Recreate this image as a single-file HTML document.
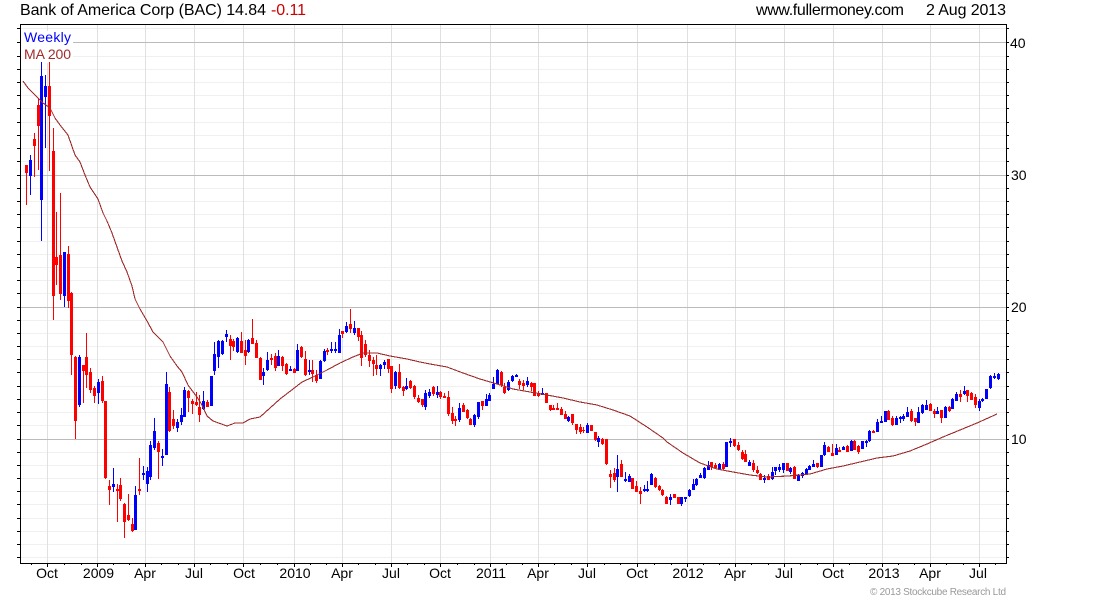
<!DOCTYPE html>
<html>
<head>
<meta charset="utf-8">
<title>Bank of America Corp (BAC)</title>
<style>
html,body{margin:0;padding:0;background:#fff;width:1100px;height:600px;overflow:hidden}
svg{display:block}
text{font-family:"Liberation Sans",Arial,sans-serif;fill:#000}
</style>
</head>
<body>
<svg width="1100" height="600" viewBox="0 0 1100 600" xmlns="http://www.w3.org/2000/svg">
<rect width="1100" height="600" fill="#fff"/>
<g shape-rendering="crispEdges" fill="none">
<path stroke="#f0f0f0" d="M21 28.5H1006M21 56.5H1006M21 69.5H1006M21 82.5H1006M21 95.5H1006M21 108.5H1006M21 122.5H1006M21 135.5H1006M21 148.5H1006M21 161.5H1006M21 188.5H1006M21 201.5H1006M21 214.5H1006M21 227.5H1006M21 241.5H1006M21 254.5H1006M21 267.5H1006M21 280.5H1006M21 293.5H1006M21 320.5H1006M21 333.5H1006M21 346.5H1006M21 359.5H1006M21 372.5H1006M21 386.5H1006M21 399.5H1006M21 412.5H1006M21 425.5H1006M21 452.5H1006M21 465.5H1006M21 478.5H1006M21 491.5H1006M21 504.5H1006M21 518.5H1006M21 531.5H1006M21 544.5H1006M21 557.5H1006"/>
<path stroke="#e0e0e0" d="M47.5 25V563M97.5 25V563M145.5 25V563M194.5 25V563M243.5 25V563M294.5 25V563M342.5 25V563M391.5 25V563M440.5 25V563M490.5 25V563M538.5 25V563M587.5 25V563M637.5 25V563M687.5 25V563M735.5 25V563M784.5 25V563M833.5 25V563M882.5 25V563M930.5 25V563M979.5 25V563"/>
<path stroke="#bbbbbb" d="M21 42.5H1006M21 175.5H1006M21 307.5H1006M21 439.5H1006"/>
</g>
<rect x="21" y="31" width="52" height="32" fill="#fff"/>
<text x="24" y="42" font-size="14" style="fill:#0000ff" textLength="47">Weekly</text>
<text x="24" y="59" font-size="14" style="fill:#a02c2c" textLength="47">MA 200</text>

<g shape-rendering="crispEdges" fill="none">
<path stroke="#0000ff" stroke-width="1" d="M30.5 155V195M41.5 62V241M45.5 75V148M64.5 252V307M79.5 355V407M98.5 379V404M113.5 468V492M135.5 486V530M143.5 466V480M147.5 467V492M150.5 441V480M154.5 418V450M162.5 449V466M166.5 372V455M177.5 419V432M181.5 408V425M184.5 387V417M203.5 391V410M211.5 376V406M214.5 342V375M218.5 340V368M222.5 340V355M226.5 330V342M237.5 337V353M248.5 339V353M263.5 368V385M267.5 352V371M278.5 350V366M290.5 366V371M297.5 344V371M309.5 360V375M320.5 360V379M324.5 349V362M331.5 342V353M335.5 342V353M339.5 329V353M346.5 322V333M354.5 321V335M380.5 364V376M384.5 360V369M395.5 371V389M406.5 378V390M425.5 390V410M429.5 389V398M437.5 386V398M459.5 403V422M474.5 414V427M478.5 402V419M486.5 394V406M489.5 393V401M493.5 377V389M497.5 369V384M508.5 380V391M512.5 375V382M516.5 374V377M527.5 377V387M542.5 388V395M568.5 416V422M587.5 423V433M598.5 436V447M617.5 455V492M625.5 472V482M629.5 474V482M644.5 485V492M647.5 481V492M651.5 473V485M670.5 494V505M681.5 497V506M685.5 497V502M689.5 489V497M693.5 479V490M696.5 478V486M700.5 473V478M704.5 467V479M708.5 461V470M719.5 463V470M726.5 442V467M730.5 438V447M749.5 460V466M764.5 475V483M772.5 467V480M775.5 467V475M779.5 464V472M783.5 463V473M790.5 467V474M798.5 474V481M802.5 472V478M806.5 468V475M809.5 465V470M813.5 460V467M821.5 455V467M824.5 442V456M836.5 444V455M843.5 446V450M851.5 440V451M862.5 441V449M866.5 440V447M869.5 430V442M877.5 419V432M881.5 416V423M885.5 411V422M896.5 416V425M900.5 416V423M903.5 414V421M907.5 407V417M918.5 407V423M922.5 404V414M926.5 400V410M937.5 407V414M945.5 406V418M952.5 398V409M956.5 392V401M964.5 386V395M979.5 399V411M982.5 398V402M986.5 389V399M990.5 375V389M994.5 373V379M998.5 373V380"/>
<path stroke="#0000ff" stroke-width="3" d="M30.5 160V176M41.5 76V200M45.5 86V97M64.5 252V296M79.5 357V405M98.5 382V393M113.5 484V487M135.5 495V530M143.5 473V475M147.5 471V484M150.5 445V477M154.5 431V448M162.5 456V458M166.5 384V455M177.5 422V428M181.5 415V422M184.5 390V417M203.5 401V409M211.5 376V406M214.5 354V371M218.5 341V357M222.5 341V354M226.5 334V337M237.5 338V352M248.5 340V352M263.5 372V376M267.5 360V370M278.5 356V366M290.5 369V371M297.5 350V371M309.5 370V372M320.5 361V379M324.5 351V361M331.5 349V351M335.5 349V351M339.5 335V353M346.5 326V332M354.5 328V333M380.5 365V369M384.5 362V365M395.5 372V386M406.5 386V389M425.5 393V407M429.5 392V396M437.5 392V395M459.5 408V420M474.5 415V425M478.5 402V417M486.5 399V406M489.5 395V401M493.5 384V389M497.5 370V384M508.5 382V390M512.5 376V381M516.5 375V377M527.5 381V385M542.5 393V395M568.5 417V421M587.5 425V433M598.5 438V442M617.5 469V477M625.5 479V481M629.5 476V482M644.5 489V491M647.5 489V491M651.5 474V485M670.5 497V500M681.5 497V504M685.5 497V499M689.5 490V496M693.5 484V490M696.5 479V485M700.5 475V478M704.5 468V478M708.5 465V470M719.5 464V469M726.5 442V467M730.5 441V443M749.5 462V466M764.5 478V480M772.5 472V479M775.5 467V471M779.5 467V470M783.5 463V470M790.5 468V472M798.5 475V481M802.5 473V476M806.5 469V474M809.5 466V470M813.5 464V467M821.5 455V467M824.5 445V455M836.5 448V455M843.5 447V450M851.5 441V451M862.5 441V449M866.5 441V443M869.5 431V441M877.5 422V432M881.5 421V423M885.5 411V422M896.5 418V425M900.5 417V419M903.5 416V419M907.5 412V417M918.5 412V423M922.5 405V413M926.5 405V410M937.5 411V414M945.5 407V418M952.5 399V409M956.5 394V401M964.5 391V394M979.5 401V408M982.5 399V401M986.5 389V399M990.5 376V388M994.5 376V378M998.5 374V379"/>
<path stroke="#ff0000" stroke-width="1" d="M26.5 165V205M34.5 133V177M38.5 99V170M49.5 62V171M53.5 128V320M56.5 212V285M60.5 193V300M68.5 246V308M71.5 292V375M75.5 356V439M83.5 365V403M86.5 333V388M90.5 368V393M94.5 386V403M102.5 376V403M105.5 401V479M109.5 480V505M117.5 484V522M120.5 478V501M124.5 503V538M128.5 494V521M132.5 518V532M139.5 458V495M158.5 441V479M169.5 387V432M173.5 410V429M188.5 390V412M192.5 399V414M196.5 392V406M199.5 395V422M207.5 400V407M230.5 335V360M233.5 339V351M241.5 332V353M245.5 340V365M252.5 319V344M256.5 340V358M260.5 357V380M271.5 354V365M275.5 353V371M282.5 356V371M286.5 363V375M294.5 368V373M301.5 346V358M305.5 351V376M312.5 360V382M316.5 370V383M327.5 348V355M342.5 331V338M350.5 309V333M358.5 328V341M361.5 331V366M365.5 340V357M369.5 350V367M373.5 357V376M376.5 355V375M388.5 359V373M391.5 366V393M399.5 364V389M403.5 386V396M410.5 380V389M414.5 385V399M418.5 395V403M422.5 399V407M433.5 386V396M440.5 391V399M444.5 393V398M448.5 391V416M452.5 407V424M455.5 416V426M463.5 403V412M467.5 409V419M470.5 418V425M482.5 401V410M501.5 371V387M504.5 383V394M519.5 379V389M523.5 380V390M531.5 382V391M534.5 383V396M538.5 391V397M546.5 393V403M550.5 405V411M553.5 405V410M557.5 403V410M561.5 407V415M565.5 411V419M572.5 414V425M576.5 424V434M580.5 424V434M583.5 427V433M591.5 425V431M595.5 432V441M602.5 438V445M606.5 439V465M610.5 470V488M614.5 468V482M621.5 460V477M632.5 478V489M636.5 481V492M640.5 487V504M655.5 477V488M659.5 485V491M662.5 489V496M666.5 496V504M674.5 494V498M678.5 497V504M711.5 462V470M715.5 463V469M723.5 462V470M734.5 439V447M738.5 442V451M742.5 450V460M745.5 450V462M753.5 460V472M757.5 466V474M760.5 473V480M768.5 474V480M787.5 463V471M794.5 466V479M817.5 463V468M828.5 446V452M832.5 444V456M839.5 447V452M847.5 445V452M854.5 440V450M858.5 445V454M873.5 430V433M888.5 410V420M892.5 416V426M911.5 409V422M915.5 418V426M930.5 403V411M934.5 409V418M941.5 410V423M949.5 406V412M960.5 390V402M967.5 390V402M971.5 392V400M975.5 394V408"/>
<path stroke="#ff0000" stroke-width="3" d="M26.5 165V173M34.5 139V146M38.5 105V126M49.5 86V116M53.5 151V296M56.5 257V265M60.5 255V294M68.5 254V301M71.5 293V355M75.5 357V421M83.5 365V371M86.5 357V375M90.5 372V390M94.5 388V396M102.5 381V401M105.5 401V478M109.5 486V490M117.5 489V491M120.5 485V499M124.5 504V522M128.5 515V520M132.5 524V531M139.5 489V491M158.5 443V452M169.5 392V431M173.5 419V426M188.5 391V398M192.5 401V404M196.5 402V405M199.5 407V415M207.5 402V407M230.5 339V346M233.5 341V347M241.5 341V353M245.5 350V356M252.5 338V344M256.5 343V358M260.5 358V380M271.5 358V360M275.5 356V368M282.5 357V366M286.5 364V374M294.5 369V373M301.5 347V357M305.5 359V375M312.5 370V374M316.5 375V381M327.5 350V352M342.5 331V334M350.5 324V329M358.5 328V337M361.5 335V358M365.5 344V355M369.5 355V361M373.5 360V364M376.5 365V369M388.5 359V369M391.5 366V389M399.5 372V388M403.5 387V391M410.5 381V388M414.5 386V397M418.5 398V402M422.5 399V405M433.5 387V394M440.5 392V397M444.5 396V398M448.5 397V414M452.5 413V421M455.5 419V421M463.5 405V412M467.5 410V418M470.5 419V425M482.5 401V406M501.5 372V385M504.5 387V393M519.5 381V385M523.5 383V386M531.5 383V387M534.5 383V396M538.5 394V396M546.5 393V403M550.5 405V410M553.5 408V410M557.5 408V410M561.5 409V415M565.5 414V419M572.5 414V423M576.5 424V430M580.5 427V432M583.5 430V431M591.5 425V431M595.5 432V440M602.5 439V444M606.5 439V464M610.5 474V477M614.5 473V480M621.5 464V477M632.5 478V489M636.5 486V492M640.5 491V494M655.5 478V487M659.5 486V490M662.5 490V495M666.5 497V504M674.5 494V498M678.5 497V504M711.5 462V467M715.5 465V468M723.5 464V469M734.5 439V446M738.5 445V450M742.5 452V459M745.5 454V462M753.5 463V470M757.5 470V473M760.5 474V480M768.5 476V480M787.5 463V471M794.5 467V479M817.5 463V467M828.5 447V452M832.5 453V456M839.5 450V452M847.5 446V452M854.5 441V450M858.5 446V452M873.5 431V433M888.5 411V420M892.5 418V425M911.5 411V421M915.5 418V422M930.5 404V411M934.5 411V414M941.5 410V418M949.5 407V411M960.5 394V397M967.5 390V396M971.5 393V400M975.5 397V405"/>
<polyline stroke="#a02c2c" stroke-width="1.1" points="23,81 28,88 33,93 38,98 43,103 50,108 55,118 60,125 68,135 75,155 80,162 85,175 90,187 98,199 103,213 107,221 112,233 117,247 122,261 127,272 132,286 135,299 140,309 147,321 153,332 163,342 170,356 177,366 182,372 188,385 197,397 202,405 207,416 213,421 227,426 235,423 243,423 250,419 260,417 270,408 280,399 293,389 302,382 313,377 327,370 340,363 353,357 363,353 377,353 390,356 407,359 420,362 430,364 447,367 463,373 480,379 497,384 513,389 530,392 547,395 563,398 580,402 597,405 613,410 630,416 647,427 663,438 667,442 683,453 700,463 717,469 733,472 750,475 767,477 788,476 810,474 827,469 843,466 860,462 877,458 893,456 910,451 927,444 943,437 960,430 977,423 997,414"/>
<rect x="20.5" y="24.5" width="986" height="539" stroke="#000000" stroke-width="1"/>
<path stroke="#000000" d="M17 28.5H20M17 42.5H20M17 56.5H20M17 69.5H20M17 82.5H20M17 95.5H20M17 108.5H20M17 122.5H20M17 135.5H20M17 148.5H20M17 161.5H20M17 175.5H20M17 188.5H20M17 201.5H20M17 214.5H20M17 227.5H20M17 241.5H20M17 254.5H20M17 267.5H20M17 280.5H20M17 293.5H20M17 307.5H20M17 320.5H20M17 333.5H20M17 346.5H20M17 359.5H20M17 372.5H20M17 386.5H20M17 399.5H20M17 412.5H20M17 425.5H20M17 439.5H20M17 452.5H20M17 465.5H20M17 478.5H20M17 491.5H20M17 504.5H20M17 518.5H20M17 531.5H20M17 544.5H20M17 557.5H20"/>
<path stroke="#000000" d="M1007 28.5H1009M1007 42.5H1009M1007 56.5H1009M1007 69.5H1009M1007 82.5H1009M1007 95.5H1009M1007 108.5H1009M1007 122.5H1009M1007 135.5H1009M1007 148.5H1009M1007 161.5H1009M1007 175.5H1009M1007 188.5H1009M1007 201.5H1009M1007 214.5H1009M1007 227.5H1009M1007 241.5H1009M1007 254.5H1009M1007 267.5H1009M1007 280.5H1009M1007 293.5H1009M1007 307.5H1009M1007 320.5H1009M1007 333.5H1009M1007 346.5H1009M1007 359.5H1009M1007 372.5H1009M1007 386.5H1009M1007 399.5H1009M1007 412.5H1009M1007 425.5H1009M1007 439.5H1009M1007 452.5H1009M1007 465.5H1009M1007 478.5H1009M1007 491.5H1009M1007 504.5H1009M1007 518.5H1009M1007 531.5H1009M1007 544.5H1009M1007 557.5H1009"/>
<path stroke="#000000" d="M47.5 564V567M97.5 564V567M145.5 564V567M194.5 564V567M243.5 564V567M294.5 564V567M342.5 564V567M391.5 564V567M440.5 564V567M490.5 564V567M538.5 564V567M587.5 564V567M637.5 564V567M687.5 564V567M735.5 564V567M784.5 564V567M833.5 564V567M882.5 564V567M930.5 564V567M979.5 564V567"/>
<path stroke="#000000" d="M31.5 564V565M64.5 564V565M81.5 564V565M113.5 564V565M129.5 564V565M161.5 564V565M178.5 564V565M210.5 564V565M227.5 564V565M260.5 564V565M277.5 564V565M310.5 564V565M326.5 564V565M358.5 564V565M375.5 564V565M407.5 564V565M424.5 564V565M457.5 564V565M474.5 564V565M506.5 564V565M522.5 564V565M554.5 564V565M571.5 564V565M604.5 564V565M620.5 564V565M654.5 564V565M671.5 564V565M703.5 564V565M719.5 564V565M751.5 564V565M768.5 564V565M800.5 564V565M817.5 564V565M849.5 564V565M866.5 564V565M898.5 564V565M914.5 564V565M946.5 564V565M963.5 564V565M995.5 564V565"/>
</g>

<text x="20" y="15" font-size="16" textLength="246">Bank of America Corp (BAC) 14.84</text>
<text x="271" y="15" font-size="16" style="fill:#cc0000" textLength="35">-0.11</text>
<text x="756" y="15" font-size="16" textLength="148">www.fullermoney.com</text>
<text x="926" y="15" font-size="16" textLength="80">2 Aug 2013</text>

<text x="1010" y="48" font-size="14">40</text>
<text x="1011" y="180" font-size="14">30</text>
<text x="1011" y="312" font-size="14">20</text>
<text x="1011" y="444" font-size="14">10</text>

<g font-size="14" text-anchor="middle">
<text x="47" y="578">Oct</text>
<text x="98.5" y="578">2009</text>
<text x="145" y="578">Apr</text>
<text x="194" y="578">Jul</text>
<text x="244" y="578">Oct</text>
<text x="295" y="578">2010</text>
<text x="342" y="578">Apr</text>
<text x="391" y="578">Jul</text>
<text x="440" y="578">Oct</text>
<text x="491" y="578">2011</text>
<text x="538" y="578">Apr</text>
<text x="587" y="578">Jul</text>
<text x="637" y="578">Oct</text>
<text x="688" y="578">2012</text>
<text x="735" y="578">Apr</text>
<text x="784" y="578">Jul</text>
<text x="833" y="578">Oct</text>
<text x="884" y="578">2013</text>
<text x="930" y="578">Apr</text>
<text x="978" y="578">Jul</text>
</g>
<text x="870" y="595" font-size="10" style="fill:#999999" textLength="136">© 2013 Stockcube Research Ltd</text>
</svg>
</body>
</html>
